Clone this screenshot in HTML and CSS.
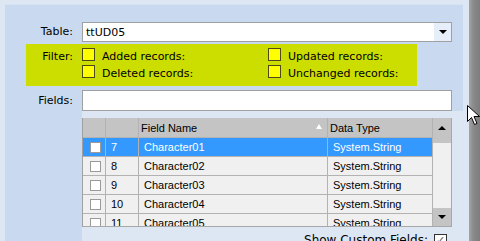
FILE: index.html
```html
<!DOCTYPE html>
<html lang="en">
<head>
  <meta charset="UTF-8" />
  <title>Table fields</title>
  <link rel="stylesheet" href="styles.css">
</head>
<body>
  <div class="frame">
    <div class="panel">
      <div class="row">
        <div class="label">Table:</div>
        <div class="combo">
          <span class="combo-text">ttUD05</span>
          <span class="combo-btn"><span class="tri-down"></span></span>
        </div>
      </div>

      <div class="row filter">
        <div class="label filter-label">Filter:</div>
        <div class="filter-opts">
          <div class="opt"><span class="ybox"></span><span class="opt-text">Added records:</span></div>
          <div class="opt"><span class="ybox"></span><span class="opt-text">Updated records:</span></div>
          <div class="opt"><span class="ybox"></span><span class="opt-text">Deleted records:</span></div>
          <div class="opt"><span class="ybox"></span><span class="opt-text">Unchanged records:</span></div>
        </div>
      </div>

      <div class="row fields-row">
        <div class="label">Fields:</div>
        <div class="input"></div>
      </div>

      <div class="grid-wrap">
        <div class="grid">
          <div class="cols">
            <div class="grow head">
              <div class="c c-chk"></div>
              <div class="c c-num"></div>
              <div class="c c-name">Field Name<span class="sort"></span></div>
              <div class="c c-type">Data Type</div>
            </div>
            <div class="body">
              <div class="grow sel">
                <div class="c c-chk"><span class="wbox"></span></div>
                <div class="c c-num">7</div>
                <div class="c c-name">Character01</div>
                <div class="c c-type">System.String</div>
              </div>
              <div class="grow">
                <div class="c c-chk"><span class="wbox"></span></div>
                <div class="c c-num">8</div>
                <div class="c c-name">Character02</div>
                <div class="c c-type">System.String</div>
              </div>
              <div class="grow">
                <div class="c c-chk"><span class="wbox"></span></div>
                <div class="c c-num">9</div>
                <div class="c c-name">Character03</div>
                <div class="c c-type">System.String</div>
              </div>
              <div class="grow">
                <div class="c c-chk"><span class="wbox"></span></div>
                <div class="c c-num">10</div>
                <div class="c c-name">Character04</div>
                <div class="c c-type">System.String</div>
              </div>
              <div class="grow">
                <div class="c c-chk"><span class="wbox"></span></div>
                <div class="c c-num">11</div>
                <div class="c c-name">Character05</div>
                <div class="c c-type">System.String</div>
              </div>
            </div>
          </div>
          <div class="scrollbar">
            <div class="sb-btn sb-up"><span class="tri-up"></span></div>
            <div class="sb-track"></div>
            <div class="sb-btn sb-down"><span class="tri-down"></span></div>
          </div>
        </div>

        <div class="custom">
          <span>Show Custom Fields:</span>
          <span class="cbox">&#10003;</span>
        </div>
      </div>
    </div>
    <div class="gap"></div>
    <div class="edge"></div>
  </div>

  <!-- mouse pointer over the window edge -->
  <svg class="cursor" width="13" height="21" viewBox="0 0 13 21">
    <path d="M0.5 0.5 L0.5 16.5 L4.5 12.5 L7.5 19.5 L10 18.5 L7 11.5 L12.5 11.5 Z" fill="#fff" stroke="#000" stroke-width="1"/>
  </svg>
</body>
</html>
```

FILE: styles.css
```css
body {
  margin: 0;
  padding: 0;
  background: #dde7f3;
  font-family: "DejaVu Sans", Verdana, sans-serif;
  font-size: 11px;
  color: #000;
  overflow: hidden;
  width: 480px;
  height: 241px;
}

.frame {
  display: flex;
  height: 241px;
  padding: 4px 0 0 5px;
  box-sizing: border-box;
  overflow: hidden;
}

.panel {
  width: 458px;
  background: #c9daf0;
  padding-top: 17px;
  box-sizing: border-box;
  border-top: 1px solid #d6e3f3;
  display: flex;
  flex-direction: column;
  overflow: hidden;
}

.gap {
  width: 6px;
}

.edge {
  flex: 1;
  margin-top: -4px;
  background: linear-gradient(to right, #a4a4a4, #8a8a8a 40%, #7c7c7c);
}

.row {
  display: flex;
  align-items: center;
  flex-shrink: 0;
}

.label {
  width: 68px;
  margin-right: 9px;
  text-align: right;
  line-height: 14px;
}

.combo {
  width: 370px;
  height: 20px;
  box-sizing: border-box;
  border: 1px solid #a0a0a0;
  background: #fff;
  display: flex;
  align-items: center;
}

.combo-text {
  flex: 1;
  padding-left: 3px;
}

.combo-btn {
  width: 17px;
  height: 18px;
  background: #e6eef9;
  display: flex;
  align-items: center;
  justify-content: center;
}

.tri-down {
  width: 0;
  height: 0;
  border-left: 4px solid transparent;
  border-right: 4px solid transparent;
  border-top: 4px solid #000;
}

.tri-up {
  width: 0;
  height: 0;
  border-left: 4px solid transparent;
  border-right: 4px solid transparent;
  border-bottom: 4px solid #000;
}

/* filter block */
.filter {
  margin: 2px 0 0 21px;
  width: 391px;
  height: 42px;
  background: #ccdd00;
  align-items: flex-start;
  padding-top: 4px;
  box-sizing: border-box;
}

.filter-label {
  width: 47px;
  padding-top: 2px;
}

.filter-opts {
  display: grid;
  grid-template-columns: 186px auto;
  row-gap: 1px;
}

.opt {
  display: flex;
  align-items: flex-start;
  gap: 7px;
}

.ybox {
  width: 13px;
  height: 13px;
  box-sizing: border-box;
  background: #ffff00;
  border: 1px solid #4d4a1a;
}

.opt-text {
  padding-top: 2px;
  line-height: 14px;
}

.fields-row {
  margin-top: 4px;
}

.input {
  width: 370px;
  height: 21px;
  box-sizing: border-box;
  border: 1px solid #a0a0a0;
  background: #fff;
}

/* grid */
.grid-wrap {
  flex: 1;
  min-height: 0;
  overflow: hidden;
  margin-left: 77px;
  background: #dde7f3;
  padding-top: 7px;
}

.grid {
  width: 370px;
  height: 109px;
  display: flex;
  box-sizing: border-box;
  border-left: 1px solid #a0a0a0;
  border-bottom: 1px solid #a8a8a8;
  font-family: "Liberation Sans", Arial, sans-serif;
  font-size: 11px;
}

.cols {
  width: 350px;
}

.grow {
  display: flex;
  height: 19px;
  box-sizing: border-box;
  border-bottom: 1px solid #b2b2b2;
  background: #f0f0f0;
}

.grow.head {
  height: 20px;
  background: #c4c4c4;
}

.grow.sel {
  background: #3399ff;
  color: #fff;
}

.body {
  height: 88px;
  overflow: hidden;
}

.c {
  display: flex;
  align-items: center;
  box-sizing: border-box;
  border-right: 1px solid #b2b2b2;
  padding-left: 5px;
  white-space: nowrap;
}

.head .c {
  padding-left: 2px;
  position: relative;
}

.c-chk {
  width: 23px;
  justify-content: center;
  padding-left: 2px;
}

.c-num {
  width: 33px;
}

.c-name {
  width: 189px;
}

.c-type {
  width: 105px;
}

.wbox {
  width: 11px;
  height: 11px;
  box-sizing: border-box;
  background: #fff;
  border: 1px solid #9a9a9a;
}

.sort {
  position: absolute;
  right: 5px;
  top: 6px;
  width: 0;
  height: 0;
  border-left: 3px solid transparent;
  border-right: 3px solid transparent;
  border-bottom: 5px solid #fff;
}

.scrollbar {
  width: 19px;
  display: flex;
  flex-direction: column;
  border-right: 1px solid #a8a8a8;
  box-sizing: border-box;
}

.sb-btn {
  background: #c4c4c4;
  display: flex;
  align-items: center;
  justify-content: center;
}

.sb-up {
  height: 25px;
  align-items: flex-start;
  padding-top: 8px;
  box-sizing: border-box;
}

.sb-track {
  flex: 1;
  background: #f0f0f0;
}

.sb-down {
  height: 18px;
}

.custom {
  display: flex;
  justify-content: flex-end;
  align-items: center;
  gap: 6px;
  width: 370px;
  margin-top: 6px;
  padding-right: 5px;
  box-sizing: border-box;
  font-size: 12px;
}

.cbox {
  width: 13px;
  height: 13px;
  box-sizing: border-box;
  border: 1px solid #333;
  background: #fff;
  font-size: 11px;
  line-height: 11px;
  text-align: center;
  color: #555;
}

.cursor {
  position: absolute;
  left: 467px;
  top: 105px;
}
```
